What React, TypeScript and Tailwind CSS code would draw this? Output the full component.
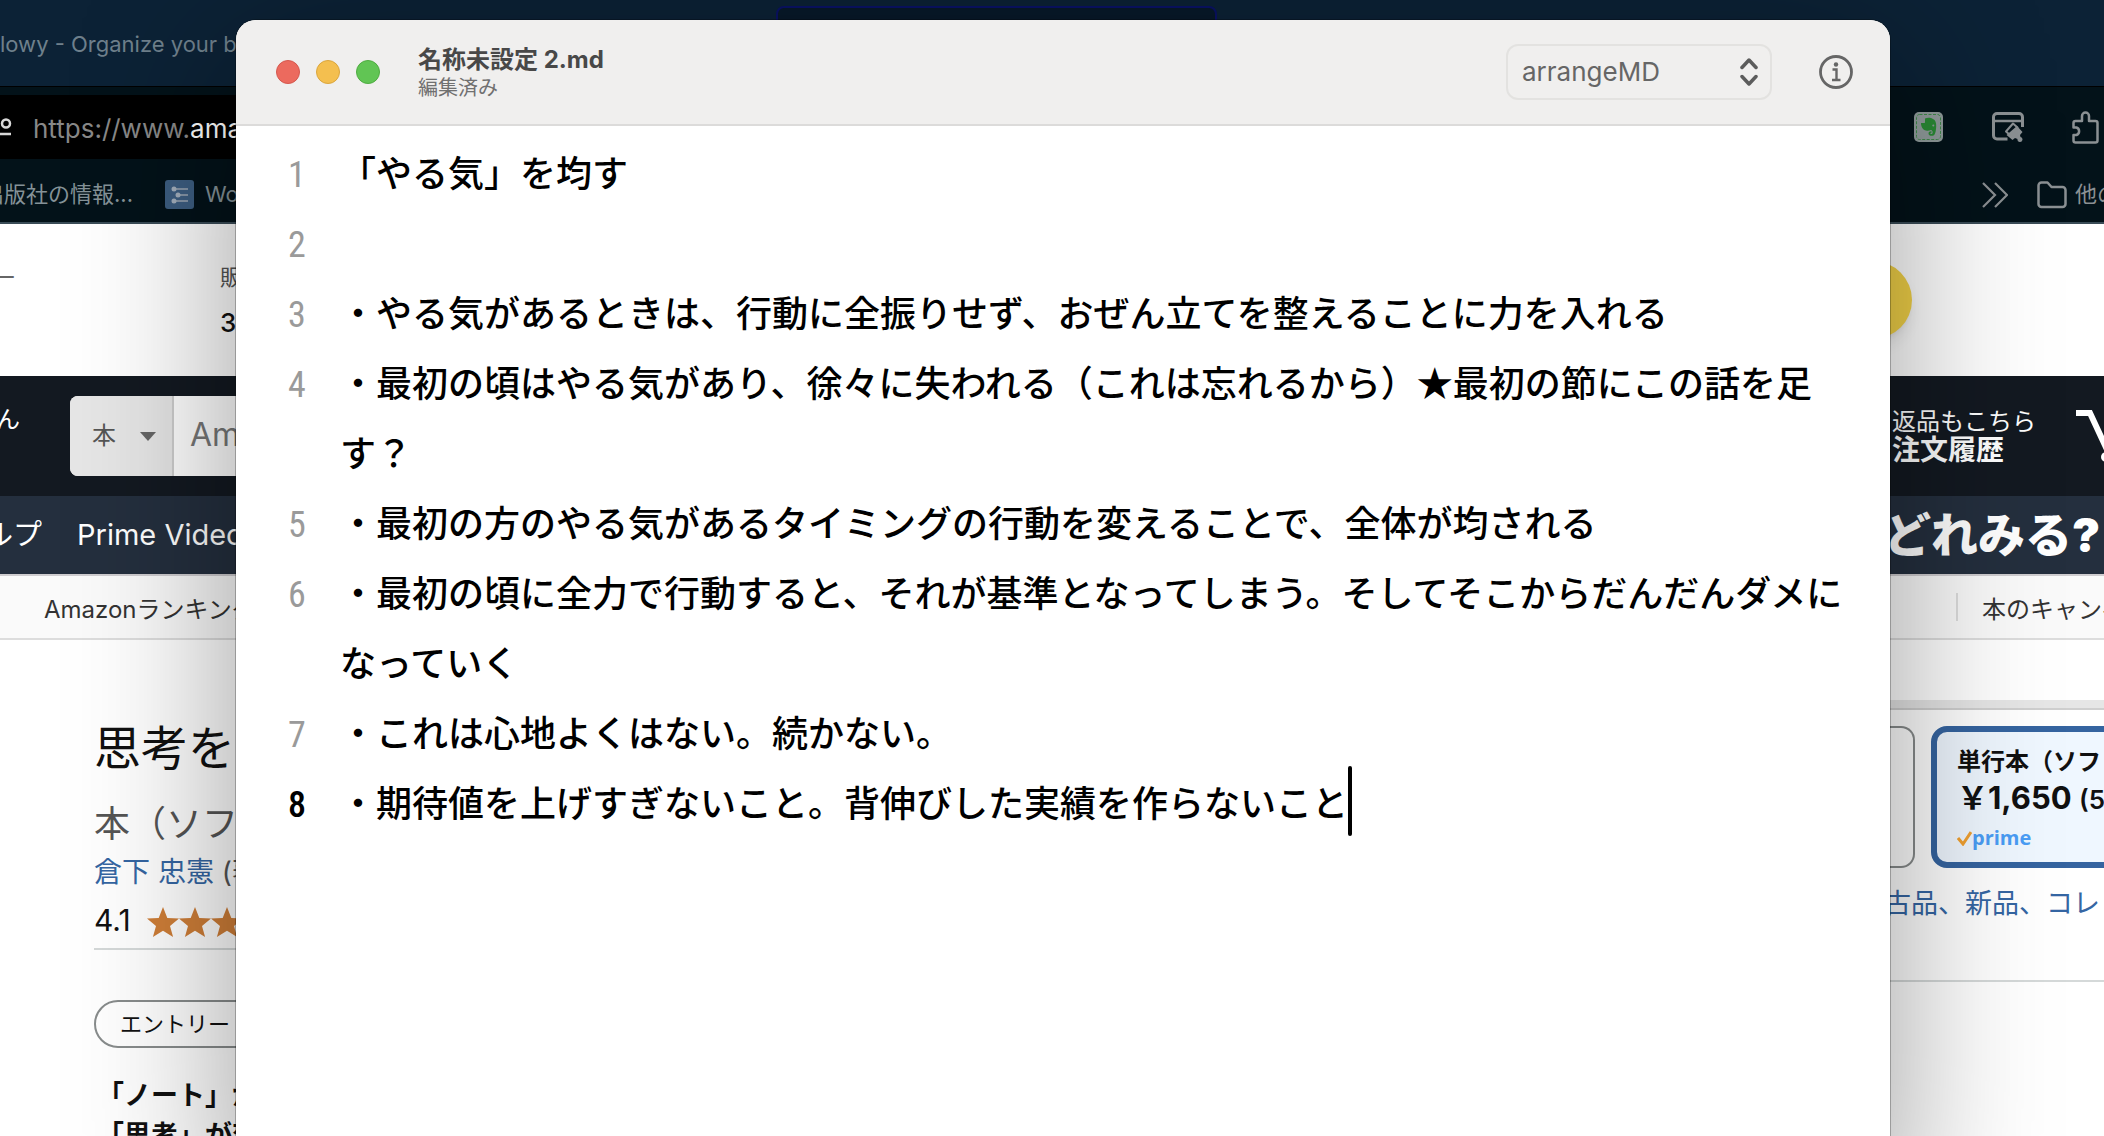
import { ReactNode } from "react";

const lines = [
  "「やる気」を均す",
  "",
  "・やる気があるときは、行動に全振りせず、おぜん立てを整えることに力を入れる",
  "・最初の頃はやる気があり、徐々に失われる（これは忘れるから）★最初の節にこの話を足す？",
  "・最初の方のやる気があるタイミングの行動を変えることで、全体が均される",
  "・最初の頃に全力で行動すると、それが基準となってしまう。そしてそこからだんだんダメになっていく",
  "・これは心地よくはない。続かない。",
  "・期待値を上げすぎないこと。背伸びした実績を作らないこと",
];

/** A strip of the browser page: something on the left edge, something on the right edge. */
function Strip({ className, left, right }: { className: string; left?: ReactNode; right?: ReactNode }) {
  return (
    <div className={`flex justify-between ${className}`}>
      <div className="flex w-[260px] shrink-0 items-center overflow-hidden whitespace-nowrap">{left}</div>
      <div className="flex w-[220px] shrink-0 items-center overflow-hidden whitespace-nowrap">{right}</div>
    </div>
  );
}

function Star() {
  return (
    <svg viewBox="0 0 32 30" className="h-[30px] w-8 shrink-0" fill="#d07f38" aria-hidden="true">
      <path d="M16 0l4.3 10.9L32 11.6l-9 7.4 3.1 11L16 23.7 5.9 30 9 19l-9-7.4 11.7-.7z" />
    </svg>
  );
}

function EvernoteIcon() {
  return (
    <svg viewBox="0 0 30 30" className="size-[30px]" aria-hidden="true">
      <rect x="0" y="0" width="29" height="30" rx="5" fill="#909b9b" />
      <rect x="2.5" y="2.5" width="24" height="25" rx="3" fill="none" stroke="#3f8a4a" strokeDasharray="3 1.5" />
      <path
        d="M11 6.500C13 5.500 17 5.500 19 7C21.500 8 22.300 11 22.200 14C22.100 18 21.500 22.500 19.500 23.500C17 24.300 14.500 23.500 14.500 21.500C14.500 19.600 16 19 17.500 19.200V20.700C16.500 20.600 16.200 21 16.300 21.600C16.500 22.300 18.300 22.300 18.600 21C18.800 19.800 18.500 18.500 17 18C15.500 18.500 14 19 12 18.500C9 18 7 15 7 11H10C11 11 11 10.500 11 10z"
        fill="#2a8a35"
      />
      <circle cx="19.300" cy="13.600" r="1" fill="#909b9b" />
    </svg>
  );
}

function WebClipIcon() {
  return (
    <svg viewBox="0 0 32 30" className="h-[30px] w-8" fill="none" stroke="#8b9093" strokeWidth="3" aria-hidden="true">
      <path d="M15.500 27H5a3.500 3.500 0 0 1-3.500-3.500V5A3.500 3.500 0 0 1 5 1.500h22A3.500 3.500 0 0 1 30.500 5v10" />
      <path d="M2 9h28" strokeWidth="2.500" />
      <path d="M21 11.500l4.500 4-7 8-4.500-4z" strokeWidth="2" strokeLinejoin="round" />
      <path d="M25 14l5.500 6-2.500 3 .500 2a2.500 2.500 0 1 1-3 2l-2.500-1-2.500 2-6-5z" fill="#8b9093" stroke="none" />
    </svg>
  );
}

function PuzzleIcon() {
  return (
    <svg viewBox="0 0 27 33" className="h-[33px] w-[27px]" fill="none" stroke="#8b9093" strokeWidth="2.500" strokeLinejoin="round" aria-hidden="true">
      <path d="M1.500 24v5.500a2 2 0 0 0 2 2h20a2 2 0 0 0 2-2V12a2 2 0 0 0-2-2H17V5a3.500 3.500 0 0 0-7 0v5H3.500a2 2 0 0 0-2 2v4.500h3a4 4 0 0 1 0 7.500z" />
    </svg>
  );
}

function BrowserPage() {
  return (
    <div className="h-full bg-white">
      <div className="flex h-[86px] items-start bg-[#0c2236]">
        <div className="flex h-full w-[260px] items-center overflow-hidden pt-0.5 whitespace-nowrap text-[22px] text-[#6f808c]">
          lowy - Organize your b
        </div>
        <div className="ml-[516px] mt-1.5 h-20 w-[441px] rounded-t-lg border-2 border-[#0a1266] bg-[#07192a]" />
      </div>

      <div className="flex h-[73px] justify-between border-t border-black bg-[#031219] pt-2">
        <div className="flex w-[260px] items-center bg-black text-[26px]">
          <svg viewBox="0 0 12 18" className="h-[18px] w-3 shrink-0" fill="none" stroke="#d8d8d8" strokeWidth="2.500" aria-hidden="true">
            <circle cx="6" cy="5.500" r="4" />
            <path d="M0 16h11" />
          </svg>
          <div className="ml-[21px] pt-0.5 whitespace-nowrap text-[#888]">
            https://www.<span className="text-white">ama</span>
          </div>
        </div>
        <div className="flex w-[190px] shrink-0 items-center overflow-hidden">
          <EvernoteIcon />
          <div className="ml-12 shrink-0"><WebClipIcon /></div>
          <div className="ml-12 shrink-0"><PuzzleIcon /></div>
        </div>
      </div>

      <div className="flex h-[65px] items-center justify-between border-b-2 border-[#3a4c57] bg-[#031219] pt-2 text-[22px] text-[#859298]">
        <div className="flex items-center">
          <div className="flex w-[133px] justify-end overflow-hidden whitespace-nowrap">出版社の情報...</div>
          <svg viewBox="0 0 30 30" className="ml-8 size-[30px] shrink-0" aria-hidden="true">
            <rect width="29" height="29" rx="3" fill="#3c5d80" />
            <g stroke="#8494a6" strokeWidth="2">
              <path d="M8 9h15M12 15h11M8 21h15" />
            </g>
            <g fill="#a3afbc">
              <circle cx="9" cy="9" r="2.500" />
              <circle cx="13" cy="15" r="2.500" />
              <circle cx="9" cy="21" r="2.500" />
            </g>
          </svg>
          <div className="ml-2.5">Wo</div>
        </div>
        <div className="flex w-[122px] items-center overflow-hidden whitespace-nowrap text-[#8b9093]">
          <svg viewBox="0 0 26 26" className="size-[26px] shrink-0" fill="none" stroke="currentColor" strokeWidth="2.200" aria-hidden="true">
            <path d="M1 1l12 12L1 25M13 1l12 12-12 12" />
          </svg>
          <svg viewBox="0 0 30 28" className="ml-[29px] h-7 w-[30px] shrink-0" fill="none" stroke="currentColor" strokeWidth="2.500" strokeLinejoin="round" aria-hidden="true">
            <path d="M1.500 4.500a3 3 0 0 1 3-3h6l4 4.500h11a3 3 0 0 1 3 3v14a3 3 0 0 1-3 3h-21a3 3 0 0 1-3-3z" />
          </svg>
          <span className="ml-2">他の</span>
        </div>
      </div>

      <div className="flex h-[152px] items-center justify-between overflow-hidden">
        <div className="flex">
          <div className="flex w-4 justify-end overflow-hidden text-[22px] leading-[46px] text-[#666]">ー</div>
          <div className="ml-[204px] flex flex-col text-[#111]">
            <span className="text-[22px] leading-[46px] text-[#555]">販</span>
            <span className="text-[26px] leading-[46px] font-medium">3</span>
          </div>
        </div>
        <div className="mr-48 size-[78px] rounded-full bg-[#f2d248] shadow-lg" />
      </div>

      <Strip
        className="h-[120px] bg-[#131921]"
        left={
          <>
            <div className="flex w-5 shrink-0 justify-end self-start overflow-hidden pt-[26px] text-[24px] text-white">ん</div>
            <div className="ml-[50px] flex h-20 shrink-0 overflow-hidden rounded-l-lg bg-white">
              <button className="flex w-[104px] shrink-0 items-center gap-6 border-r-2 border-[#cdcdcd] bg-[#e6e6e6] pl-[22px] text-[24px] text-[#555]">
                本
                <svg viewBox="0 0 16 9" className="h-[9px] w-4" fill="#666" aria-hidden="true">
                  <path d="M0 0h16L8 9z" />
                </svg>
              </button>
              <input aria-label="検索" placeholder="Am" className="w-24 pb-0.5 pl-4 text-[32px] placeholder:text-[#777] placeholder:opacity-100" />
            </div>
          </>
        }
        right={
          <>
            <a href="#orders" className="ml-2 flex flex-col text-white">
              <span className="text-[24px] leading-[29px]">返品もこちら</span>
              <span className="text-[28px] leading-[29px] font-bold">注文履歴</span>
            </a>
            <svg viewBox="0 0 60 60" className="ml-10 size-[60px] shrink-0 self-center" fill="none" stroke="#fff" strokeWidth="6" aria-hidden="true">
              <path d="M0 7h14l20 43h24" />
              <circle cx="30" cy="51" r="5" fill="#fff" stroke="none" />
            </svg>
          </>
        }
      />

      <Strip
        className="h-[78px] bg-[#242f3e] text-[29px] text-white"
        left={
          <>
            <div className="flex w-[42px] shrink-0 justify-end overflow-hidden">ルプ</div>
            <a href="#prime" className="ml-[35px]">Prime Video</a>
          </>
        }
        right={<span className="text-[47px] font-black">どれみる?</span>}
      />

      <Strip
        className="h-[66px] border-t-2 border-b-2 border-t-[#cfcdd0] border-b-[#ddd] bg-[#fafafa] text-[24px] text-[#333]"
        left={<a href="#ranking" className="ml-11 pt-1.5">Amazonランキング</a>}
        right={
          <>
            <div className="ml-[72px] h-7 w-0.5 shrink-0 bg-[#ddd]" />
            <a href="#campaign" className="ml-6 pt-1.5">本のキャンペーン</a>
          </>
        }
      />

      <div className="flex justify-between">
        <div className="ml-[94px] flex w-[160px] flex-col overflow-hidden whitespace-nowrap pt-[78px] text-[#111]">
          <h1 className="text-[47px] leading-[60px]">思考を</h1>
          <p className="mt-4 text-[36px] leading-[60px] text-[#555]">本（ソフ</p>
          <p className="text-[28px] leading-9 text-[#555]">
            <a href="#author" className="text-[#3566a3]">倉下 忠憲</a> (著)
          </p>
          <div className="mt-1.5 flex h-[54px] items-center border-b-2 border-[#d5d9d9] text-[30px]">
            <span className="w-[53px] pb-1">4.1</span>
            <Star />
            <Star />
            <Star />
          </div>
          <button className="mt-[50px] flex h-12 w-60 items-center rounded-full border-2 border-[#888c8c] pl-6 text-[22px]">
            エントリー
          </button>
          <p className="mt-7 pl-[3px] text-[27px] leading-10 font-bold">
            「ノート」が
            <br />
            「思考」が変
          </p>
        </div>

        <div className="w-[220px] overflow-hidden whitespace-nowrap pt-[60px]">
          <div className="h-2.5 border-b-2 border-[#cfcfcf] bg-[#e6e6e6]" />
          <div className="mt-4 flex h-[142px]">
            <div className="w-[31px] shrink-0 rounded-r-[14px] border-2 border-l-0 border-[#888c8c]" />
            <button className="ml-4 flex w-60 shrink-0 flex-col items-start rounded-[16px] border-[6px] border-[#3564a0] bg-[#eff7ff] pt-3 pl-5 text-[#111]">
              <span className="text-[24px] leading-9 font-bold">単行本（ソフ</span>
              <span className="text-[31px] leading-9 font-bold">
                ￥1,650 <span className="text-[26px] font-semibold">(5</span>
              </span>
              <span className="flex items-center font-['Open_Sans'] text-[20px] leading-10 font-bold text-[#4a9df5]">
                <svg viewBox="0 0 15 15" className="size-[15px]" fill="none" stroke="#f0a030" strokeWidth="3" aria-hidden="true">
                  <path d="M1 7l5 6 8-12" />
                </svg>
                prime
              </span>
            </button>
          </div>
          <div className="h-[114px] border-b-2 border-[#d5d9d9] pt-4 text-[27px]">
            <a href="#used" className="text-[#3566a3]">古品、新品、コレ</a>
          </div>
        </div>
      </div>
    </div>
  );
}

function EditorWindow() {
  return (
    <section
      aria-label="名称未設定2.md"
      className="absolute top-5 right-[214px] -bottom-16 left-[236px] overflow-hidden rounded-[20px] bg-white font-['Inter','Noto_Sans_CJK_JP',sans-serif] shadow-[0_0_0_1px_rgba(0,0,0,0.25),0_36px_160px_rgba(0,0,0,0.4)]"
    >
      <header className="flex h-[106px] items-center border-b-2 border-[#dcdbda] bg-[#f0efee] pr-9 pl-10">
        <div className="flex gap-4">
          <button aria-label="閉じる" className="size-6 rounded-full border border-[#d5584e] bg-[#ec6a5e]" />
          <button aria-label="しまう" className="size-6 rounded-full border border-[#dba63d] bg-[#f4bf4f]" />
          <button aria-label="拡大" className="size-6 rounded-full border border-[#4fac41] bg-[#61c554]" />
        </div>
        <div className="ml-[38px] flex-1">
          <h2 className="text-[24px] leading-8 font-bold text-[#484848]">名称未設定 2.md</h2>
          <p className="text-[20px] leading-6 text-[#707070]">編集済み</p>
        </div>
        <div className="relative">
          <select
            aria-label="書類スタイル"
            className="h-14 w-[266px] appearance-none rounded-[12px] border-2 border-[#e3e2e0] bg-transparent pb-0.5 pl-3.5 text-[26px] text-[#666]"
          >
            <option>arrangeMD</option>
          </select>
          <svg viewBox="0 0 18 28" className="pointer-events-none absolute top-3.5 right-3.5 h-7 w-[18px]" fill="none" stroke="#5c5c5c" strokeWidth="3.500" strokeLinecap="round" strokeLinejoin="round" aria-hidden="true">
            <path d="M2 9.500L9 2l7 7.500M2 18.500L9 26l7-7.500" />
          </svg>
        </div>
        <button aria-label="情報" className="ml-[46px]">
          <svg viewBox="0 0 36 36" className="size-9" fill="none" stroke="#666" strokeWidth="2.800" aria-hidden="true">
            <circle cx="18" cy="18" r="15.500" />
            <circle cx="18" cy="10.500" r="2.200" fill="#666" stroke="none" />
            <path d="M14.500 15.500h4v10M14 26h8.500" strokeWidth="2.400" />
          </svg>
        </button>
      </header>
      <div
        role="textbox"
        aria-multiline="true"
        aria-label="本文"
        className="pt-2.5 pr-5 font-['Noto_Sans_CJK_JP',sans-serif] text-[36px] leading-[70px] font-medium text-black"
      >
        {lines.map((line, i) => {
          const current = i === lines.length - 1;
          return (
            <div key={i} className="flex items-start">
              <span
                className={
                  current
                    ? "w-[104px] shrink-0 pt-2 pl-[52px] font-['Liberation_Sans_Narrow','Roboto_Condensed',Roboto] leading-[62px] font-medium text-black"
                    : "w-[104px] shrink-0 pt-2 pl-[52px] font-['Liberation_Sans_Narrow','Roboto_Condensed',Roboto] leading-[62px] font-normal text-[#9a9a9a]"
                }
              >
                {i + 1}
              </span>
              <p className="min-h-[70px] min-w-0 flex-1">
                {line}
                {current && <span className="inline-block h-[70px] w-1 rounded-full bg-black align-bottom" />}
              </p>
            </div>
          );
        })}
      </div>
    </section>
  );
}

export default function App() {
  return (
    <main lang="ja" className="relative h-screen overflow-hidden font-['Inter','Noto_Sans_CJK_JP',sans-serif]">
      <BrowserPage />
      <EditorWindow />
    </main>
  );
}
